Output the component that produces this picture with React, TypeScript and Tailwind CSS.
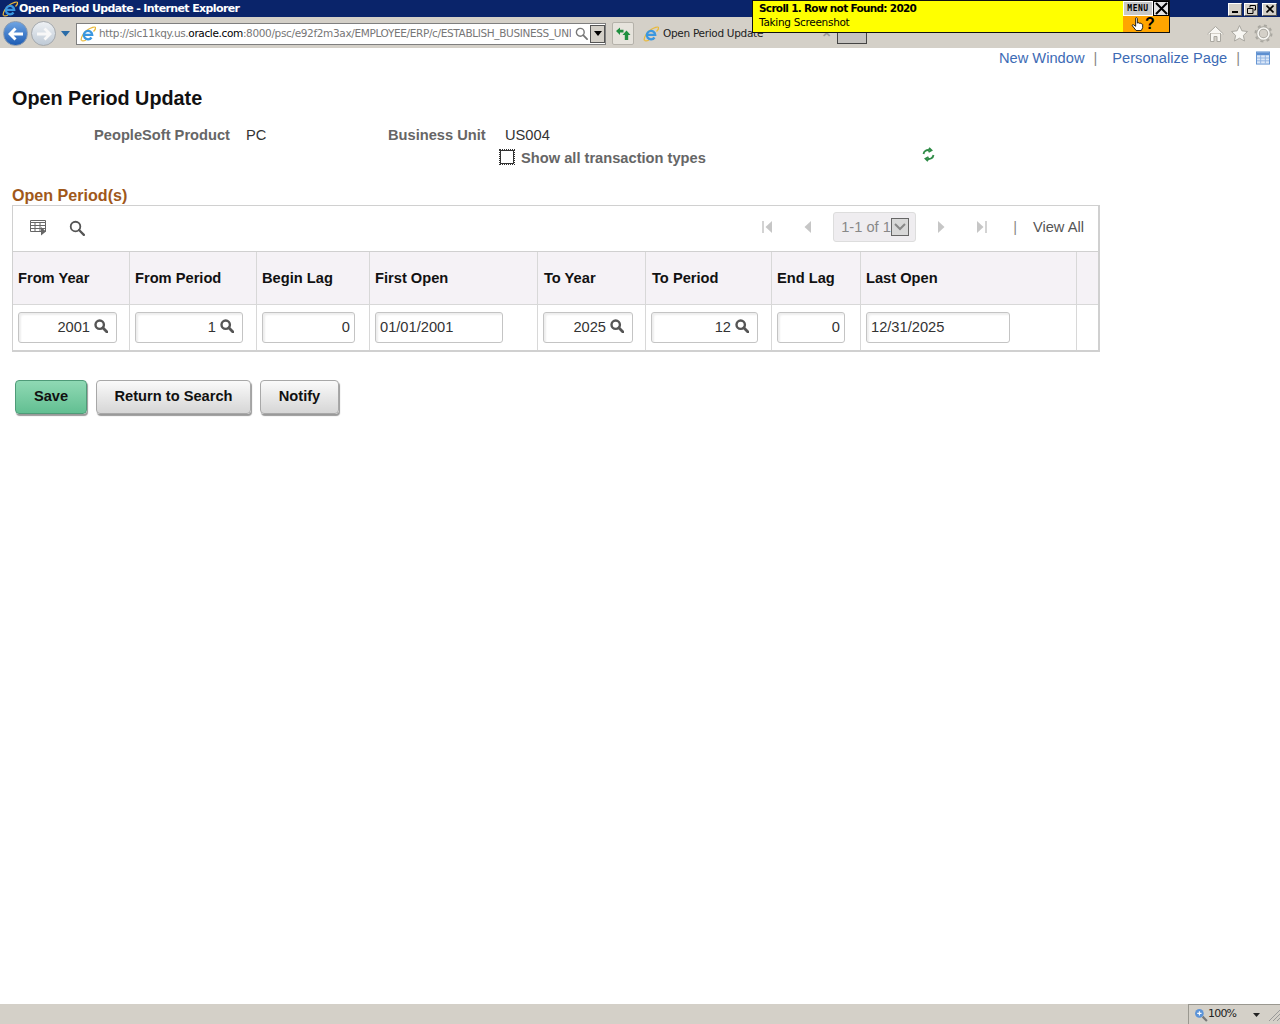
import React from "react";

const IeLogo = ({ s = 16 }: { s?: number }) => (
  <svg width={s} height={s} viewBox="0 0 16 16" className="shrink-0">
    <path d="M1.500 14.500C.2 12.500 4 5.500 8 3.500 11 1.800 15 .200 15.500 1.500 16 3 14.500 4.500 13.500 5.500" fill="none" stroke="#e9b93a" strokeWidth="1.300" />
    <path d="M1.500 14.500C3 15.500 5 14.500 6 14" fill="none" stroke="#e9b93a" strokeWidth="1.100" />
    <path d="M4 8.800h8.200A4.200 4.200 0 1 0 11.500 11.500" fill="none" stroke="#3a97e0" strokeWidth="2.300" />
  </svg>
);

const Mag = ({ c = "#555555", s = 14, w = 2.4 }: { c?: string; s?: number; w?: number }) => (
  <svg width={s} height={s} viewBox="0 0 14 14" className="shrink-0">
    <circle cx="5.700" cy="5.700" r="4.200" fill="none" stroke={c} strokeWidth={w} />
    <path d="M8.800 8.800L13 13" stroke={c} strokeWidth={w + 0.4} strokeLinecap="round" />
  </svg>
);

const Lookup = ({ value, w }: { value: string; w: string }) => (
  <div className={`${w} h-[31px] flex items-center justify-end rounded-[3px] border border-[#c4c4c4] bg-white shadow-[inset_2px_2px_2px_#eeeeee] pr-[8px] pb-[2px] gap-[4px]`}>
    <span className="text-[14.67px] text-[#333333]">{value}</span>
    <div className="mb-[2px]"><Mag /></div>
  </div>
);

const Num = ({ value, w }: { value: string; w: string }) => (
  <div className={`${w} h-[31px] flex items-center justify-end rounded-[3px] border border-[#c4c4c4] bg-white shadow-[inset_2px_2px_2px_#eeeeee] pr-[4px] pb-[2px] text-[14.67px] text-[#333333]`}>
    {value}
  </div>
);

const DateBox = ({ value, w }: { value: string; w: string }) => (
  <div className={`${w} h-[31px] flex items-center rounded-[3px] border border-[#c4c4c4] bg-white shadow-[inset_2px_2px_2px_#eeeeee] pl-[4px] pb-[2px] text-[14.67px] text-[#333333]`}>
    {value}
  </div>
);

const cols = "grid grid-cols-[117px_127px_113px_168px_108px_126px_89px_216px_minmax(0,1fr)]";
const headers = ["From Year", "From Period", "Begin Lag", "First Open", "To Year", "To Period", "End Lag", "Last Open", ""];

const Btn = ({ children, green, w }: { children: React.ReactNode; green?: boolean; w: string }) => (
  <button
    className={`${w} h-[34px] pb-[2px] rounded-[4px] border text-[14.67px] font-bold text-[#111111] shadow-[1px_2px_1px_#999999] ${
      green
        ? "border-[#4f9b78] bg-gradient-to-b from-[#8fd9b4] to-[#62bf92]"
        : "border-[#a8a8a8] bg-gradient-to-b from-[#fafafa] to-[#d6d6d6]"
    }`}
  >
    {children}
  </button>
);

const Tri = ({ dir, bar }: { dir: "l" | "r"; bar?: boolean }) => (
  <svg width="12" height="16" viewBox="0 0 12 16">
    {dir === "l" ? (
      <>
        {bar && <path d="M1 2v12" stroke="#c4c4c4" strokeWidth="1.500" />}
        <path d="M10 2v12L3.500 8z" fill="#c6c6c6" />
      </>
    ) : (
      <>
        <path d="M2 2v12l6.500-6z" fill="#c6c6c6" />
        {bar && <path d="M11 2v12" stroke="#c4c4c4" strokeWidth="1.500" />}
      </>
    )}
  </svg>
);

const winBtn = "h-[13px] mt-[1px] bg-[#d4d0c8] border border-t-white border-l-white border-r-[#555555] border-b-[#555555] flex items-center justify-center";

export default function App() {
  return (
    <div className="relative w-[1280px] h-[1024px] flex flex-col bg-white overflow-hidden font-['Liberation_Sans',Arial,sans-serif]">
      {/* Title bar */}
      <div className="h-[17px] bg-[#0a246a] flex items-center shrink-0 pl-[2px]">
        <IeLogo s={16} />
        <span className="ml-[1px] text-white text-[11px] font-bold font-['DejaVu_Sans',sans-serif] tracking-[-0.62px] leading-none">Open Period Update - Internet Explorer</span>
        <div className="ml-auto flex pr-[3px]">
          <div className={`${winBtn} w-[14px]`}>
            <div className="w-[6px] h-[2px] bg-black mt-[6px]" />
          </div>
          <div className={`${winBtn} w-[14px] ml-[2px]`}>
            <svg width="9" height="9" viewBox="0 0 9 9"><path d="M3 2.500V.5h5.500v4.500H7M.5 3.500h5.500v5H.5z" fill="none" stroke="#000" strokeWidth="1" /></svg>
          </div>
          <div className={`${winBtn} w-[15px] ml-[4px]`}>
            <svg width="8" height="8" viewBox="0 0 8 8"><path d="M.5.5l7 7M7.500.5l-7 7" stroke="#000" strokeWidth="1.600" /></svg>
          </div>
        </div>
      </div>

      {/* IE toolbar */}
      <div className="h-[31px] bg-[#d4d0c8] flex items-center shrink-0 pl-[3px] pt-[2px]">
        <div className="w-[25px] h-[25px] rounded-full bg-gradient-to-b from-[#6ea4e2] to-[#1c5cb4] border border-[#8a9bb0] flex items-center justify-center">
          <svg width="16" height="14" viewBox="0 0 16 14"><path d="M7.500 1.500L2 7l5.500 5.500M3 7h12" stroke="#fff" strokeWidth="3" fill="none" /></svg>
        </div>
        <div className="ml-[3px] w-[25px] h-[25px] rounded-full bg-gradient-to-b from-[#eef1f4] to-[#bfcad6] border border-[#a5a9ad] flex items-center justify-center">
          <svg width="16" height="14" viewBox="0 0 16 14"><path d="M8.500 1.500L14 7l-5.500 5.500M13 7H1" stroke="#f8f8f8" strokeWidth="2.800" fill="none" /></svg>
        </div>
        <svg className="ml-[5px]" width="9" height="7" viewBox="0 0 9 7"><path d="M0 1h9L4.500 6.500z" fill="#2a6ca8" /></svg>
        <div className="ml-[6px] w-[530px] h-[22px] bg-white border border-[#7f7f7f] flex items-center pl-[3px] overflow-hidden">
          <IeLogo s={16} />
          <span className="ml-[3px] w-[472px] whitespace-nowrap overflow-hidden text-[10.500px] text-[#777777] font-['DejaVu_Sans',sans-serif] tracking-[-0.35px]">
            http://slc11kqy.us.<span className="text-black">oracle.com</span>:8000/psc/e92f2m3ax/EMPLOYEE/ERP/c/ESTABLISH_BUSINESS_UNI
          </span>
          <div className="ml-[4px]"><Mag c="#777777" s={13} w={1.500} /></div>
          <div className="ml-[2px] w-[15px] h-[18px] bg-[#d4d0c8] border border-[#555555] flex items-center justify-center">
            <svg width="8" height="5" viewBox="0 0 8 5"><path d="M0 0h8L4 5z" fill="#000" /></svg>
          </div>
        </div>
        <div className="ml-[6px] w-[22px] h-[23px] bg-[#e6e3dc] border border-[#b5b2aa] rounded-[2px] flex items-center justify-center">
          <svg width="16" height="16" viewBox="0 0 16 16" fill="#1f8f3f">
            <path d="M1 5l4-3.500v2.300h3.500v2.700H5V9z" />
            <path d="M11.500 4.500L15.500 9h-2.300v5h-3.400V9H7.500z" />
          </svg>
        </div>
        <div className="ml-[6px] w-[197px] h-[29px] flex items-center pl-[3px] shrink-0">
          <IeLogo s={16} />
          <span className="ml-[4px] text-[10.500px] text-[#222222] font-['DejaVu_Sans',sans-serif] tracking-[-0.3px] whitespace-nowrap">Open Period Update</span>
          <span className="ml-auto pr-[6px] text-[11px] font-bold text-[#999999]">✕</span>
        </div>
        <div className="w-[30px] h-[14px] self-start mt-[11px] border border-[#444444] border-t-0 bg-[#c4c2bf]" />
        <div className="ml-auto flex items-center gap-[5px] pr-[7px]">
          <svg width="19" height="19" viewBox="0 0 19 19"><path d="M1.500 10l8-7.500 8 7.500M4.500 9v8.500h3.500v-5h3v5h3.500V9" fill="#f8f7f3" stroke="#a9a7a0" strokeWidth="1" /></svg>
          <svg width="19" height="19" viewBox="0 0 19 19"><path d="M9.500 1.500l2.400 5.300 5.600.7-4.100 3.900 1.100 5.600-5-2.800-5 2.800 1.100-5.600L1.500 7.500l5.600-.7z" fill="#f8f7f3" stroke="#a9a7a0" strokeWidth="1" /></svg>
          <svg width="19" height="19" viewBox="0 0 19 19"><circle cx="9.500" cy="9.500" r="5.500" fill="none" stroke="#a9a7a0" strokeWidth="3.400" /><circle cx="9.500" cy="9.500" r="5.500" fill="none" stroke="#f8f7f3" strokeWidth="1.600" /><circle cx="9.500" cy="9.500" r="8" fill="none" stroke="#a9a7a0" strokeWidth="2" strokeDasharray="3 3.300" /></svg>
        </div>
      </div>

      {/* Content */}
      <div className="flex-1 w-full flex flex-col min-h-0">
        <div className="h-[21px] flex items-center justify-end text-[14.67px] text-[#3d6bb5] pr-[10px] pb-[2px]">
          <span>New Window</span>
          <span className="ml-[9px] text-[#888888]">|</span>
          <span className="ml-[15px]">Personalize Page</span>
          <span className="ml-[9px] text-[#888888]">|</span>
          <svg className="ml-[16px]" width="14" height="14" viewBox="0 0 15 14">
            <rect x="0.500" y="0.500" width="14" height="13" fill="#dce8f8" stroke="#5d8fd0" />
            <rect x="1" y="1" width="13" height="3" fill="#5d8fd0" />
            <path d="M1 7h13M1 10h13M5 4v9M10 4v9" stroke="#8fb2e0" />
          </svg>
        </div>

        <h1 className="mt-[18px] ml-[12px] h-[22px] text-[19.800px] leading-[22px] font-bold text-[#111111]">Open Period Update</h1>

        <div className="mt-[15px] h-[22px] flex items-center text-[14.67px]">
          <span className="ml-[94px] w-[137px] font-bold text-[#666666] whitespace-nowrap">PeopleSoft Product</span>
          <span className="ml-[15px] w-[142px] text-[#333333]">PC</span>
          <span className="w-[117px] font-bold text-[#666666] whitespace-nowrap">Business Unit</span>
          <span className="text-[#333333]">US004</span>
        </div>

        <div className="relative h-[23px] flex items-center">
          <div className="ml-[500px] mb-[2px] w-[14px] h-[14px] border border-[#333333] outline-1 outline-dotted outline-[#333333] bg-white" />
          <span className="ml-[7px] text-[14.67px] font-bold text-[#666666]">Show all transaction types</span>
          <svg className="absolute left-[921px] top-[1px]" width="15" height="15" viewBox="0 0 15 15">
            <path d="M2.500 7C3 4 5.500 2.500 8.500 3.200M8 .8l2.500 2.500L7.500 5" fill="none" stroke="#2e8b46" strokeWidth="1.800" />
            <path d="M12.500 8C12 11 9.500 12.500 6.500 11.800M7 14.200l-2.500-2.500L7.500 10" fill="none" stroke="#2e8b46" strokeWidth="1.800" />
          </svg>
        </div>

        <div className="mt-[17px] ml-[12px] h-[18px] text-[16.100px] leading-[18px] font-bold text-[#a0581a]">Open Period(s)</div>

        {/* Grid */}
        <div className="mt-[1px] ml-[12px] w-[1088px] border border-[#d0d0d0] border-r-2 border-b-2 text-[14.67px]">
          <div className="h-[45px] flex items-center bg-white pb-[4px]">
            <svg className="ml-[17px] mt-[2px]" width="17" height="17" viewBox="0 0 17 17">
              <path d="M0.500 1.500h15v2h-15zM0.500 3.500h15v9h-15zM0.500 6.500h15M0.500 9.500h15M5 3.500v9M10 3.500v9" fill="none" stroke="#666666" />
              <path d="M11 8l5 4.500-5 4z" fill="#666666" />
            </svg>
            <div className="ml-[22px] mt-[2px]"><Mag c="#555555" s={16} w={1.600} /></div>
            <div className="ml-auto flex items-center">
              <Tri dir="l" bar />
              <div className="ml-[27px]"><Tri dir="l" /></div>
              <div className="ml-[20px] w-[83px] h-[30px] rounded-[3px] bg-[#efedf0] border border-[#dddddd] flex items-center pl-[7px] text-[#888888] whitespace-nowrap">
                1-1 of 1
                <div className="w-[18px] h-[18px] bg-[#d8d8d8] border border-[#666666] flex items-center justify-center">
                  <svg width="12" height="8" viewBox="0 0 12 8"><path d="M1 1l5 5 5-5" fill="none" stroke="#888888" strokeWidth="2" /></svg>
                </div>
              </div>
              <div className="ml-[20px]"><Tri dir="r" /></div>
              <div className="ml-[27px]"><Tri dir="r" bar /></div>
              <span className="ml-[26px] text-[#888888]">|</span>
              <span className="ml-[16px] mr-[14px] text-[#555555]">View All</span>
            </div>
          </div>

          <div className={`${cols} h-[53px] bg-[#f5f2f6] border-t border-[#d0d0d0]`}>
            {headers.map((h, i) => (
              <div key={i} className={`flex items-center font-bold text-[#111111] ${i === 4 || i === 5 ? "pl-[6px]" : "pl-[5px]"} ${i < 8 ? "border-r border-[#d8d8d8]" : ""}`}>
                {h}
              </div>
            ))}
          </div>

          <div className={`${cols} h-[46px] bg-white border-t border-[#d8d8d8]`}>
            <div className="flex items-center pl-[5px] border-r border-[#d8d8d8]"><Lookup value="2001" w="w-[99px]" /></div>
            <div className="flex items-center pl-[5px] border-r border-[#d8d8d8]"><Lookup value="1" w="w-[108px]" /></div>
            <div className="flex items-center pl-[5px] border-r border-[#d8d8d8]"><Num value="0" w="w-[93px]" /></div>
            <div className="flex items-center pl-[5px] border-r border-[#d8d8d8]"><DateBox value="01/01/2001" w="w-[128px]" /></div>
            <div className="flex items-center pl-[5px] border-r border-[#d8d8d8]"><Lookup value="2025" w="w-[90px]" /></div>
            <div className="flex items-center pl-[5px] border-r border-[#d8d8d8]"><Lookup value="12" w="w-[107px]" /></div>
            <div className="flex items-center pl-[5px] border-r border-[#d8d8d8]"><Num value="0" w="w-[68px]" /></div>
            <div className="flex items-center pl-[5px] border-r border-[#d8d8d8]"><DateBox value="12/31/2025" w="w-[144px]" /></div>
            <div />
          </div>
        </div>

        <div className="mt-[28px] ml-[15px] flex gap-[9px]">
          <Btn green w="w-[72px]">Save</Btn>
          <Btn w="w-[155px]">Return to Search</Btn>
          <Btn w="w-[79px]">Notify</Btn>
        </div>
      </div>

      {/* Status bar */}
      <div className="h-[20px] bg-[#d4d0c8] shrink-0 flex items-center justify-end">
        <div className="w-[92px] h-[20px] border-l border-t border-[#9a9890] flex items-center pl-[5px] text-[11px] text-[#222222] font-['DejaVu_Sans',sans-serif]">
          <svg width="14" height="14" viewBox="0 0 13 13"><circle cx="5" cy="5" r="4" fill="#5b93d8" /><path d="M8 8l4 4" stroke="#777777" strokeWidth="2" /><path d="M3 5h4M5 3v4" stroke="#fff" /></svg>
          <span className="tracking-[-0.8px]">100%</span>
          <svg className="ml-[17px]" width="7" height="4" viewBox="0 0 7 4"><path d="M0 0h7L3.500 4z" fill="#222222" /></svg>
          <svg className="ml-auto" width="12" height="14" viewBox="0 0 12 14"><path d="M1 13L12 2M5 13l7-7M9 13l3-3" stroke="#999999" /></svg>
        </div>
      </div>

      {/* Floating message overlay */}
      <div className="absolute left-[752px] top-0 w-[418px] h-[33px] border border-[#111111] bg-[#ffff00] flex">
        <div className="flex-1 pl-[6px] text-[10.500px] font-['DejaVu_Sans',sans-serif] text-black leading-[14px] tracking-[-0.3px]">
          <div className="font-bold tracking-[-0.7px]">Scroll 1. Row not Found: 2020</div>
          <div>Taking Screenshot</div>
        </div>
        <div className="w-[46px] flex flex-col">
          <div className="h-[15px] flex">
            <div className="w-[30px] bg-[#c8c8c8] border border-white text-[8px] font-bold tracking-[0.5px] text-black flex items-center justify-center font-['DejaVu_Sans_Mono',monospace]">MENU</div>
            <div className="flex-1 bg-[#e4e4e4] border border-black flex items-center justify-center">
              <svg width="13" height="13" viewBox="0 0 13 13"><path d="M1 1l11 11M12 1L1 12" stroke="#000" strokeWidth="2" /></svg>
            </div>
          </div>
          <div className="flex-1 bg-[#ffa500] flex items-center pl-[8px]">
            <svg width="14" height="16" viewBox="0 0 15 16" className="shrink-0">
              <path d="M5 1.500c.8-.8 1.800 0 1.800.8V7l1-.3c.8-.3 1 .2 1.200.6l1-.2c.7-.1 1 .3 1 .8.8-.2 1.500 0 1.500 1V12l-1.500 3H5.500L1.500 10c-.6-.8.3-1.800 1.200-1.200L5 10.500V2.300z" fill="#fff" stroke="#000" strokeWidth="0.900" />
            </svg>
            <span className="text-[16px] font-bold leading-[16px] text-black">?</span>
          </div>
        </div>
      </div>
    </div>
  );
}
